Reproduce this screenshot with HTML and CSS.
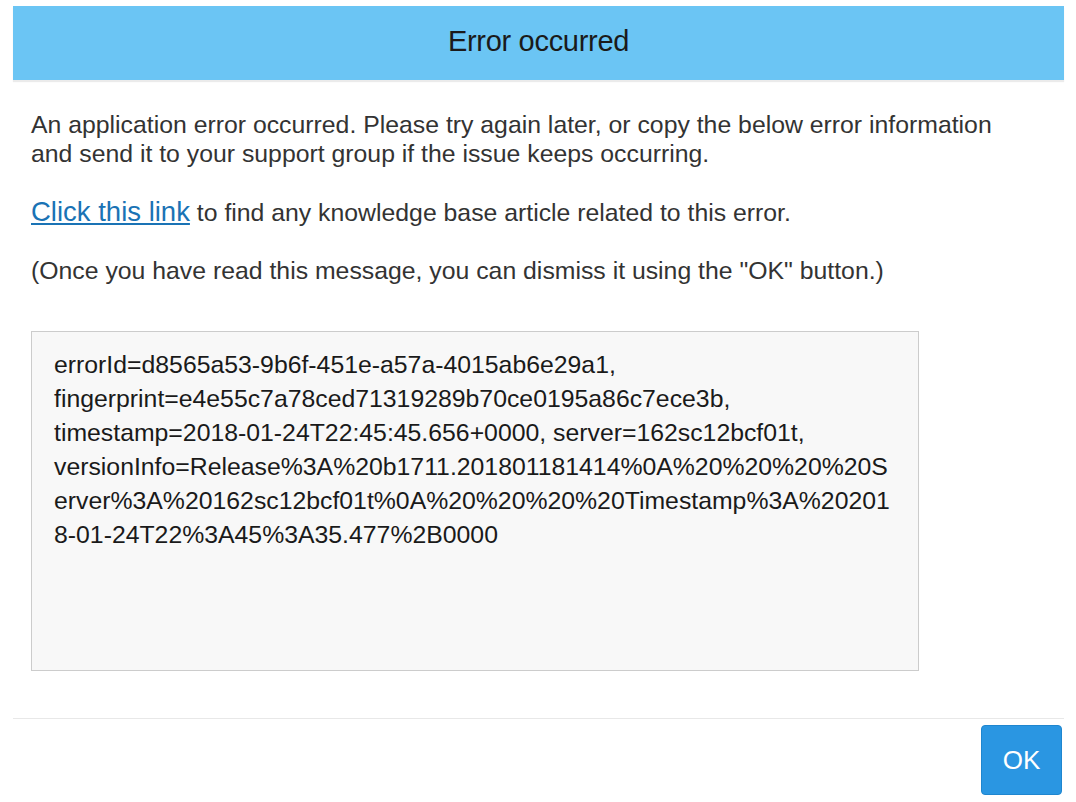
FILE: index.html
```html
<!DOCTYPE html>
<html>
<head>
<meta charset="utf-8">
<link rel="stylesheet" href="styles.css">
</head>
<body>
<div class="dialog">
  <div class="header"><h1 class="title">Error occurred</h1></div>
  <div class="content">
    <p class="para">An application error occurred. Please try again later, or copy the below error information and send it to your support group if the issue keeps occurring.</p>
    <p class="para"><a class="link" href="#">Click this link</a> to find any knowledge base article related to this error.</p>
    <p class="para">(Once you have read this message, you can dismiss it using the "OK" button.)</p>
    <div class="details">errorId=d8565a53-9b6f-451e-a57a-4015ab6e29a1,<br>fingerprint=e4e55c7a78ced71319289b70ce0195a86c7ece3b,<br>timestamp=2018-01-24T22:45:45.656+0000, server=162sc12bcf01t,<br>versionInfo=Release%3A%20b1711.201801181414%0A%20%20%20%20S<br>erver%3A%20162sc12bcf01t%0A%20%20%20%20Timestamp%3A%20201<br>8-01-24T22%3A45%3A35.477%2B0000</div>
  </div>
  <div class="footer"><button class="ok">OK</button></div>
</div>
</body>
</html>
```
FILE: styles.css
```css
html, body {
  margin: 0;
  padding: 0;
  background: #ffffff;
}
body {
  font-family: "Liberation Sans", Arial, sans-serif;
  color: #333333;
}
.dialog {
  margin: 6px 12px 0 13px;
}
.header {
  background: #6bc5f4;
  height: 74px;
  box-sizing: border-box;
  padding-bottom: 4px;
  display: flex;
  align-items: center;
  justify-content: center;
  box-shadow: 0 2px 1px rgba(0, 0, 0, 0.08);
}
.title {
  margin: 0;
  font-size: 29px;
  font-weight: normal;
  color: #1a1a1a;
  letter-spacing: -0.3px;
}
.content {
  padding: 30px 70px 0 18px;
}
.para {
  margin: 0 0 29px 0;
  font-size: 24.8px;
  line-height: 29px;
}
.link {
  color: #1a73b5;
  text-decoration: underline;
  font-size: 27.5px;
}
.details {
  width: 842px;
  height: 304px;
  background: #f8f8f8;
  border: 1px solid #cccccc;
  padding: 16px 22px 18px 22px;
  font-size: 24.8px;
  line-height: 34px;
  color: #1a1a1a;
  margin-top: 46px;
}
.footer {
  margin-top: 47px;
  border-top: 1px solid #e8e8e8;
  display: flex;
  justify-content: flex-end;
  padding-top: 6px;
}
.ok {
  width: 81px;
  height: 70px;
  margin-right: 2px;
  background: #2a96e2;
  border: 1px solid #1f86cf;
  border-radius: 4px;
  color: #ffffff;
  font-family: "Liberation Sans", Arial, sans-serif;
  font-size: 26px;
}
```
